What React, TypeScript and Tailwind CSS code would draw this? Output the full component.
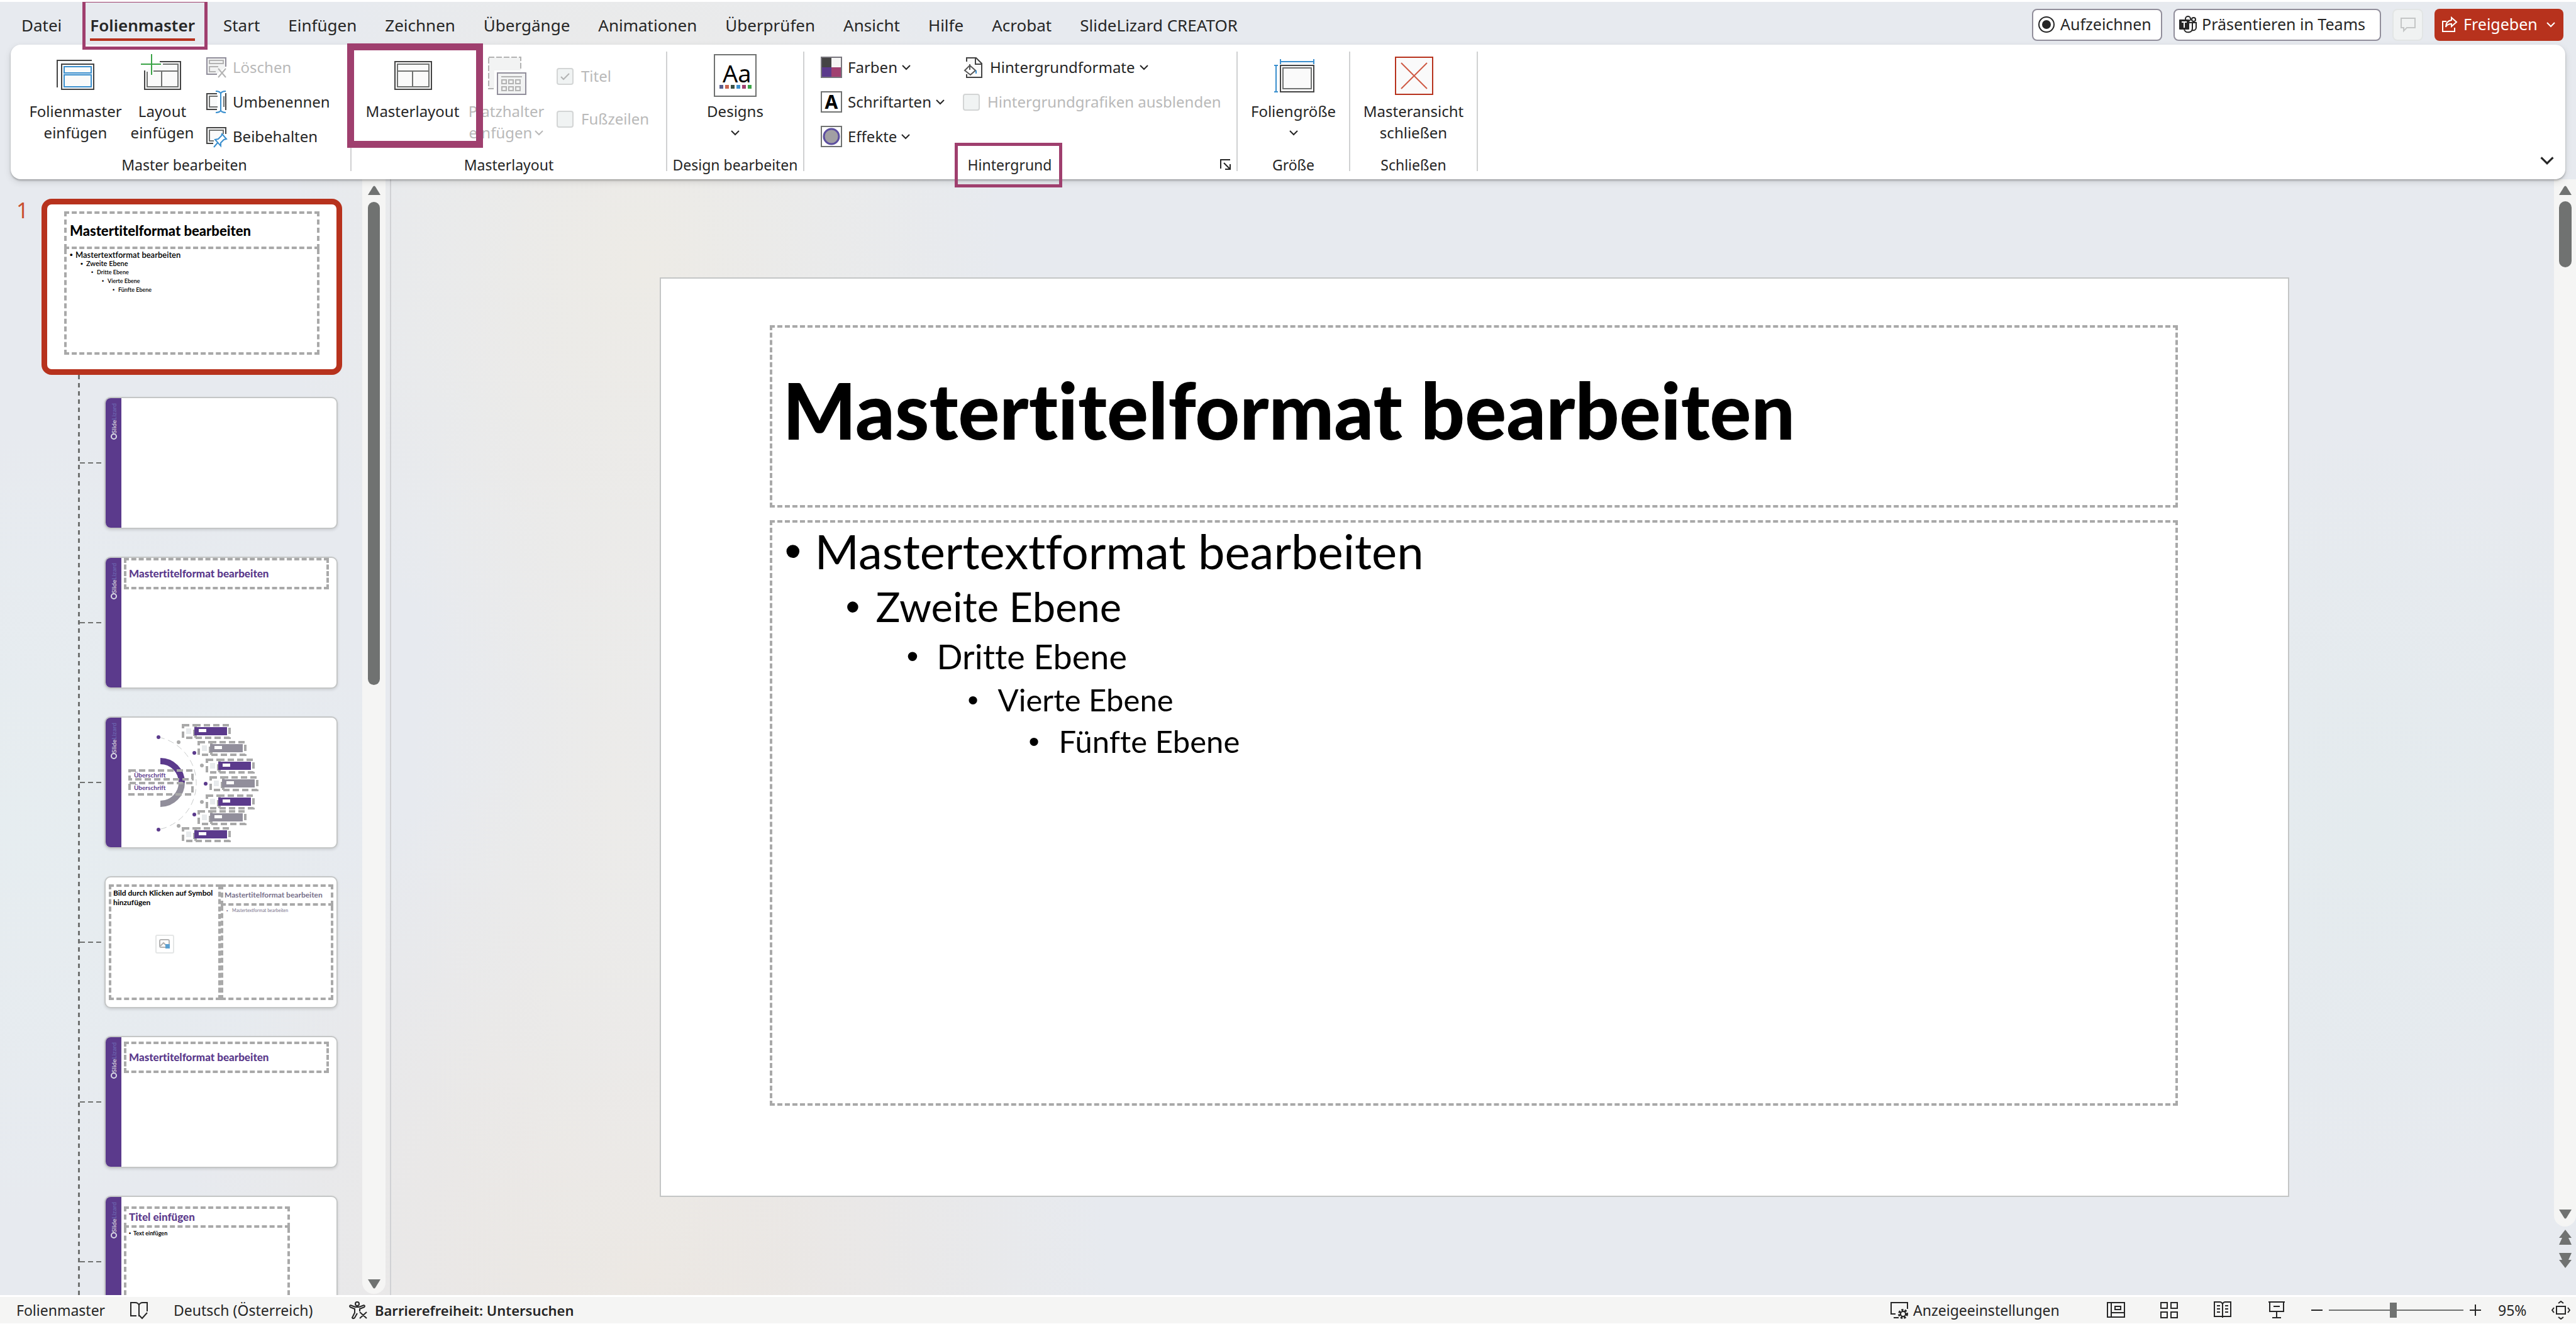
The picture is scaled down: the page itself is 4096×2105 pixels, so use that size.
import React, { useState } from 'react';
import clsx from 'clsx';

const TABS = [
  'Datei',
  'Folienmaster',
  'Start',
  'Einfügen',
  'Zeichnen',
  'Übergänge',
  'Animationen',
  'Überprüfen',
  'Ansicht',
  'Hilfe',
  'Acrobat',
  'SlideLizard CREATOR',
];

const BODY_LEVELS = [
  { text: 'Mastertextformat bearbeiten', big: 'text-[76px] leading-[90px] pl-0', mini: 'text-[13px] pl-0' },
  { text: 'Zweite Ebene', big: 'text-[65px] leading-[87px] pl-[97px]', mini: 'text-[11px] pl-[17px]' },
  { text: 'Dritte Ebene', big: 'text-[54px] leading-[71px] pl-[194px]', mini: 'text-[9px] pl-[34px]' },
  { text: 'Vierte Ebene', big: 'text-[49px] leading-[66px] pl-[291px]', mini: 'text-[9px] pl-[51px]' },
  { text: 'Fünfte Ebene', big: 'text-[49px] leading-[66px] pl-[388px]', mini: 'text-[9px] pl-[68px]' },
];

/* ---------- Icons ---------- */

const Chevron = ({ className = 'w-[14px] h-[14px]' }: { className?: string }) => (
  <svg viewBox="0 0 14 14" className={clsx('shrink-0', className)} fill="none" stroke="currentColor" strokeWidth="2">
    <path d="M1 4l6 6 6-6" />
  </svg>
);

const BigIcon = ({ children }: { children: React.ReactNode }) => (
  <svg viewBox="0 0 68 68" className="w-[68px] h-[68px] shrink-0 overflow-visible" fill="none" strokeWidth="2">
    {children}
  </svg>
);

const SmallIcon = ({ children }: { children: React.ReactNode }) => (
  <svg viewBox="0 0 34 36" className="w-[34px] h-[36px] shrink-0 overflow-visible" fill="none" strokeWidth="2">
    {children}
  </svg>
);

const InsertMasterIcon = () => (
  <BigIcon>
    <path d="M5 53V10h55" stroke="#444" />
    <rect x="12" y="16" width="51" height="40" fill="#fafafa" stroke="#444" />
    <rect x="16" y="20" width="43" height="10" stroke="#3a8fce" />
    <rect x="16" y="33" width="43" height="19" stroke="#3a8fce" />
  </BigIcon>
);

const InsertLayoutIcon = () => (
  <BigIcon>
    <path d="M6 26V56h57V12H30" fill="#fafafa" stroke="#444" />
    <path d="M35 16h24v36H10V28M20 27h39M33 27v25" stroke="#707271" />
    <path d="M17 0v33M0 16h32" stroke="#3ba447" />
  </BigIcon>
);

const MasterLayoutIcon = () => (
  <BigIcon>
    <rect x="6" y="12" width="58" height="44" fill="#fafafa" stroke="#444" />
    <rect x="10" y="16" width="50" height="36" stroke="#707271" />
    <path d="M10 27h50M34 27v25" stroke="#707271" />
  </BigIcon>
);

const PlaceholderIcon = () => (
  <BigIcon>
    <rect x="6" y="5" width="51" height="50" fill="#f2f3f3" stroke="#b3b3b3" strokeDasharray="9 3" />
    <path d="M15 26h49v42H15z" fill="#fff" />
    <rect x="20" y="30" width="45" height="34" fill="#f2f3f3" stroke="#918e9b" />
    <path d="M26 36h33" stroke="#b3b3b3" />
    {[27, 38, 49].map((x) => (
      <g key={x} stroke="#b3b3b3">
        <rect x={x} y="41" width="7" height="6" />
        <rect x={x} y="52" width="7" height="6" />
      </g>
    ))}
  </BigIcon>
);

const DesignsIcon = () => (
  <BigIcon>
    <rect x="1" y="1" width="66" height="66" fill="#fff" stroke="#707271" />
    <text x="14" y="45" fontSize="38" fill="#000" className="font-['Noto_Sans',sans-serif]">
      Aa
    </text>
    {['#595f8f', '#c9634f', '#3d5245', '#3a8fce', '#a04070', '#3ba447'].map((c, i) => (
      <rect key={c} x={9 + i * 9} y="49" width="6" height="6" fill={c} />
    ))}
  </BigIcon>
);

const SlideSizeIcon = () => (
  <BigIcon>
    <path d="M13 12h53M13 8v8M66 8v8M6 18v42M3 18h6M3 60h6" stroke="#3a8fce" />
    <rect x="13" y="18" width="53" height="42" fill="#fafafa" stroke="#444" />
    <rect x="17" y="22" width="45" height="33" stroke="#707271" />
  </BigIcon>
);

const CloseMasterIcon = () => (
  <BigIcon>
    <rect x="5" y="5" width="59" height="59" fill="#fafafa" stroke="#b7321d" />
    <path d="M14 14l41 41M55 14L14 55" stroke="#cf5b45" />
  </BigIcon>
);

const DeleteIcon = () => (
  <SmallIcon>
    <path d="M18 29H2V3h30v14" fill="#f2f3f3" stroke="#918e9b" />
    <path d="M6 7h22v5H6zM16 25H6v-8h14" stroke="#b3b3b3" />
    <path d="M20 20l12 14M32 20L20 34" stroke="#b3b3b3" />
  </SmallIcon>
);

const RenameIcon = () => (
  <SmallIcon>
    <path d="M18 5H2v25h16M31 5h1v25h-1" fill="#fafafa" stroke="#444" />
    <path d="M19 9H6v17h13M29 9v17" stroke="#707271" />
    <path d="M16 1c5 0 8 2 8 4 0-2 3-4 8-4M16 35c5 0 8-2 8-4 0 2 3 4 8 4M24 4v28" stroke="#3a8fce" />
  </SmallIcon>
);

const PreserveIcon = () => (
  <SmallIcon>
    <path d="M12 29H2V4h30v10" fill="#fafafa" stroke="#444" />
    <path d="M13 25H6V8h22v6" stroke="#707271" />
    <path d="M26 14l7 8-4 1-5 5 0 5-9-10 5-1 5-5zM19 28l-6 7" fill="#fff" stroke="#3a8fce" />
  </SmallIcon>
);

const ColorsIcon = () => (
  <SmallIcon>
    <rect x="2" y="3" width="15" height="15" fill="#444" />
    <rect x="17" y="3" width="15" height="15" fill="#f5f5f4" />
    <rect x="2" y="18" width="15" height="15" fill="#5b3a8c" />
    <rect x="17" y="18" width="15" height="15" fill="#a04070" />
    <rect x="1" y="2" width="32" height="32" stroke="#77757c" />
  </SmallIcon>
);

const FontsIcon = () => (
  <SmallIcon>
    <rect x="1" y="2" width="32" height="32" fill="#fff" stroke="#707271" />
    <text x="17" y="29" fontSize="30" fontWeight="700" textAnchor="middle" fill="#000" className="font-['Noto_Sans',sans-serif]">
      A
    </text>
  </SmallIcon>
);

const EffectsIcon = () => (
  <SmallIcon>
    <rect x="1" y="2" width="32" height="32" fill="#fff" stroke="#707271" />
    <circle cx="17" cy="18" r="12" fill="#a19fa3" stroke="#5d4fa0" strokeWidth="3" />
  </SmallIcon>
);

const BackgroundIcon = () => (
  <SmallIcon>
    <path d="M6 9V3h15l9 9v22H6v-5M20 3v10h10" fill="#fafafa" stroke="#444" />
    <path d="M11 13v9M11 15l9 8-8 7-9-7z" fill="#fff" stroke="#565656" />
    <path d="M21 23v5" stroke="#3a8fce" />
  </SmallIcon>
);

const RecordIcon = () => (
  <svg viewBox="0 0 26 26" className="w-[26px] h-[26px] shrink-0" fill="none">
    <circle cx="13" cy="13" r="12" stroke="#262626" strokeWidth="2" />
    <circle cx="13" cy="13" r="7" fill="#262626" />
  </svg>
);

const TeamsIcon = () => (
  <svg viewBox="0 0 28 28" className="w-[28px] h-[28px] shrink-0" fill="none">
    <circle cx="14" cy="5" r="4" stroke="#262626" strokeWidth="2" />
    <circle cx="23" cy="6" r="3" stroke="#262626" strokeWidth="2" />
    <path d="M19 11h8v8c0 3-3 5-6 4M9 11h12v9c0 8-11 8-13 2" stroke="#262626" strokeWidth="2" />
    <rect x="0" y="6" width="16" height="16" rx="1" fill="#262626" />
    <path d="M4 10h8M8 10v9" stroke="#fff" strokeWidth="2" />
  </svg>
);

const CommentIcon = () => (
  <svg viewBox="0 0 26 26" className="w-[26px] h-[26px]" fill="none" stroke="#c4c6c6" strokeWidth="2">
    <path d="M2 3h22v15H11l-5 5v-5H2z" />
  </svg>
);

const ShareIcon = () => (
  <svg viewBox="0 0 26 26" className="w-[26px] h-[26px] shrink-0" fill="none" stroke="currentColor" strokeWidth="2">
    <path d="M8 8H2v16h19v-6" />
    <path d="M16 2l8 7-8 7v-4c-5 0-8 2-9 5 0-6 3-10 9-11z" />
  </svg>
);

const LauncherIcon = () => (
  <svg viewBox="0 0 18 18" className="w-[18px] h-[18px]" fill="none" stroke="#262626" strokeWidth="2">
    <path d="M1 15V1h15M6 6l9 9M16 8v8H8" />
  </svg>
);

const StatusIcon = ({ children }: { children: React.ReactNode }) => (
  <svg viewBox="0 0 30 30" className="w-[30px] h-[30px] shrink-0" fill="none" stroke="#262626" strokeWidth="2">
    {children}
  </svg>
);

/* ---------- Ribbon parts ---------- */

type Disabled = { disabled?: boolean };

const Group = ({ label, className, launcher, children }: { label: string; className: string; launcher?: boolean; children: React.ReactNode }) => (
  <section aria-label={label} className={clsx('relative flex flex-col justify-between border-r-2 border-[#d0d1d2] shrink-0', className)}>
    <div className="flex">{children}</div>
    <div className="flex items-center">
      <span className="flex-1 text-center text-[23px] leading-5 whitespace-nowrap">{label}</span>
      {launcher && (
        <button aria-label="Hintergrund formatieren" className="w-[34px] flex justify-center">
          <LauncherIcon />
        </button>
      )}
    </div>
  </section>
);

const BigButton = ({ icon, lines, className, chevron, disabled }: { icon: React.ReactNode; lines: string[]; className: string; chevron?: boolean } & Disabled) => (
  <button disabled={disabled} className={clsx('flex flex-col items-center gap-[6px] pt-1 text-[24px] leading-[34px] whitespace-nowrap', disabled && 'text-[#b9b9b9]', className)}>
    {icon}
    <span className="flex flex-col items-center">
      <span>{lines[0]}</span>
      <span className="flex items-center gap-1 h-[34px]">
        {lines[1]}
        {chevron && <Chevron />}
      </span>
    </span>
  </button>
);

const SmallButton = ({ icon, label, chevron, disabled }: { icon: React.ReactNode; label: string; chevron?: boolean } & Disabled) => (
  <button disabled={disabled} className={clsx('flex items-center gap-[9px] h-[50px] text-[24px] whitespace-nowrap', disabled && 'text-[#b9b9b9]')}>
    {icon}
    <span className="flex items-center gap-[7px]">
      {label}
      {chevron && <Chevron />}
    </span>
  </button>
);

const Check = ({ label, checked }: { label: string; checked?: boolean }) => (
  <label className="flex items-center gap-3 h-[50px] text-[24px] text-[#b9b9b9] whitespace-nowrap">
    <span className="relative flex">
      <input type="checkbox" disabled defaultChecked={checked} className="appearance-none w-[27px] h-[27px] rounded-[4px] border-2 border-[#d3d5d5] bg-[#f0f3f3]" />
      {checked && (
        <svg viewBox="0 0 27 27" className="absolute inset-0" fill="none" stroke="#b3b3b3" strokeWidth="2">
          <path d="M7 14l4 4 9-9" />
        </svg>
      )}
    </span>
    {label}
  </label>
);

const Highlight = ({ className }: { className: string }) => (
  <span className={clsx('absolute border-[#9f3f6e] pointer-events-none z-10', className)} />
);

/* ---------- Thumbnails ---------- */

const Dashed = ({ className, children }: { className?: string; children?: React.ReactNode }) => (
  <div className={clsx('border-4 border-dashed border-[#a9a9a9]', className)}>{children}</div>
);

const Bullet = ({ className }: { className: string }) => (
  <span className={clsx("inline-block shrink-0 font-['Liberation_Sans',sans-serif]", className)}>•</span>
);

const PurpleBar = () => (
  <div className="w-[25px] shrink-0 bg-[#5b3a8c] flex flex-col items-center pt-[8px]">
    <span className="[writing-mode:vertical-rl] rotate-180 text-[10px] leading-[12px] font-bold text-[#c9c5d4]">
      Slide<span className="text-[#6a62ad]">Lizard</span>
    </span>
    <span className="w-[10px] h-[10px] rounded-full border-2 border-[#d8d8e4]" />
  </div>
);

const LayoutRow = ({ children }: { children: React.ReactNode }) => (
  <li className="flex items-center shrink-0">
    <span className="w-[39px] h-[2px] bg-[repeating-linear-gradient(90deg,#707271_0_8px,transparent_8px_13px)]" />
    <button className="flex items-stretch text-left w-[371px] h-[210px] rounded-[10px] overflow-hidden bg-white border-2 border-[#c4c6c6] shadow-[0_2px_4px_rgba(0,0,0,0.12)]">
      {children}
    </button>
  </li>
);

const PURPLE = '#5b3a8c';
const GREY = '#918e9b';

const BARS = [
  { x: 121, y: 11, fill: PURPLE },
  { x: 146, y: 38, fill: GREY },
  { x: 159, y: 66, fill: PURPLE },
  { x: 165, y: 94, fill: GREY },
  { x: 159, y: 123, fill: PURPLE },
  { x: 146, y: 148, fill: GREY },
  { x: 121, y: 175, fill: PURPLE },
];

const DOTS = [
  [84, 31], [116, 39], [141, 56], [153, 76], [159, 105], [153, 134], [141, 154], [116, 172], [84, 178],
];

const RadialLayout = () => (
  <svg viewBox="25 0 342 206" className="w-[342px] h-[206px]" fill="none">
    <path d="M84 31A75 75 0 0 1 84 178" stroke="#c9cbcb" strokeDasharray="10 6" />
    <path d="M87 69a34 34 0 0 1 34 34" stroke={PURPLE} strokeWidth="10" />
    <path d="M121 103a34 34 0 0 1-34 34" stroke={GREY} strokeWidth="10" />
    {DOTS.map(([x, y], i) => (
      <circle key={i} cx={x} cy={y} r="3" fill={i % 2 ? '#a9a9a9' : PURPLE} />
    ))}
    <g stroke="#a9a9a9" strokeWidth="4" strokeDasharray="10 5">
      <rect x="38" y="84" width="100" height="14" />
      <rect x="38" y="104" width="100" height="18" />
    </g>
    <g fontSize="10" fontWeight="700" fill={PURPLE} className="font-['Lato',sans-serif]">
      <text x="45" y="95">Überschrift</text>
      <text x="45" y="115">Überschrift</text>
    </g>
    {BARS.map(({ x, y, fill }) => (
      <g key={y}>
        <g stroke="#a9a9a9" strokeWidth="4" strokeDasharray="10 5">
          <rect x={x + 2} y={y + 1} width="20" height="20" />
          <rect x={x + 20} y={y + 1} width="56" height="20" />
        </g>
        <rect x={x + 20} y={y + 4} width="52" height="13" fill={fill} />
        <rect x={x + 7} y={y + 6} width="8" height="9" fill="#e7eaec" />
        <rect x={x + 27} y={y + 7} width="12" height="5" fill="#fff" />
      </g>
    ))}
  </svg>
);

const MasterThumb = () => (
  <button className="flex flex-col items-stretch justify-start text-left ml-[66px] w-[478px] h-[280px] rounded-[16px] border-[9px] border-[#b7321d] bg-white px-[27px] pt-[11px] font-['Lato_Black','Lato',sans-serif] text-black">
    <Dashed className="h-[60px] flex items-center px-[5px] text-[22px] font-black whitespace-nowrap">Mastertitelformat bearbeiten</Dashed>
    <Dashed className="h-[168px] border-t-0 pl-[5px] pt-[2px] font-['Lato',sans-serif]">
      <ul className="leading-[14px]">
        {BODY_LEVELS.map(({ text, mini }) => (
          <li key={text} className={clsx('flex h-[14px] items-center font-semibold', mini)}>
            <Bullet className="w-[9px]" />
            {text}
          </li>
        ))}
      </ul>
    </Dashed>
  </button>
);

const Sidebar = () => (
  <aside className="flex w-[622px] shrink-0 border-r-2 border-[#d0d1d4]">
    <div className="relative flex-1 overflow-hidden pt-[31px] [font-variant-ligatures:none]">
      <span className="absolute left-[26px] top-[28px] text-[34px] leading-[42px] text-[#c9502f]">1</span>
      <MasterThumb />
      <div className="flex pl-[124px]">
        <span className="w-[3px] bg-[repeating-linear-gradient(#707271_0_7px,transparent_7px_13px)]" />
        <ul className="flex flex-col gap-[44px] pt-[35px] font-['Lato',sans-serif]">
          <LayoutRow>
            <PurpleBar />
          </LayoutRow>
          <LayoutRow>
            <PurpleBar />
            <Dashed className="ml-1 w-[326px] h-[50px] flex items-center px-1 text-[17px] font-black text-[#5b3a8c] whitespace-nowrap">
              Mastertitelformat bearbeiten
            </Dashed>
          </LayoutRow>
          <LayoutRow>
            <PurpleBar />
            <RadialLayout />
          </LayoutRow>
          <LayoutRow>
            <div className="flex flex-1 px-[5px] py-[11px]">
              <Dashed className="w-[178px] flex flex-col px-[3px] pt-[2px] text-[12px] leading-[15px] font-bold text-black">
                Bild durch Klicken auf Symbol hinzufügen
                <span className="mt-[44px] self-center w-[30px] h-[30px] rounded-[3px] border-2 border-[#e4e6e6] flex items-center justify-center">
                  <svg viewBox="0 0 18 16" className="w-[18px] h-[16px]" fill="none">
                    <rect x="1" y="1" width="15" height="12" rx="2" stroke="#b3b3b3" strokeWidth="2" />
                    <path d="M2 11l5-5 5 5" stroke="#b3b3b3" strokeWidth="2" />
                    <rect x="10" y="8" width="7" height="7" fill="#5a9fd0" />
                  </svg>
                </span>
              </Dashed>
              <div className="flex-1 flex flex-col">
                <Dashed className="h-[34px] flex items-center px-[2px] text-[12px] font-bold text-[#77708a] whitespace-nowrap">Mastertitelformat bearbeiten</Dashed>
                <Dashed className="flex-1 border-t-0 pl-[5px] pt-[2px] text-[7px] leading-[10px] text-[#77708a]">
                  <Bullet className="w-[9px]" />
                  Mastertextformat bearbeiten
                </Dashed>
              </div>
            </div>
          </LayoutRow>
          <LayoutRow>
            <PurpleBar />
            <Dashed className="ml-1 mt-[7px] w-[326px] h-[50px] flex items-center px-1 text-[17px] font-black text-[#5b3a8c] whitespace-nowrap">
              Mastertitelformat bearbeiten
            </Dashed>
          </LayoutRow>
          <LayoutRow>
            <PurpleBar />
            <div className="ml-1 mt-[15px] w-[264px] flex flex-col">
              <Dashed className="h-[34px] flex items-center px-1 text-[17px] font-black text-[#5b3a8c]">Titel einfügen</Dashed>
              <Dashed className="flex-1 border-t-0 pl-1 pt-[2px] text-[9px] leading-[14px] font-bold text-black">
                <Bullet className="w-[7px]" />
                Text einfügen
              </Dashed>
            </div>
          </LayoutRow>
        </ul>
      </div>
    </div>
    <div className="w-[37px] mr-[7px] mb-[2px] rounded-b-[18px] bg-[#f5f5f4] flex flex-col items-center justify-between pt-[10px] pb-[8px] text-[#707271]">
      <div className="flex flex-col items-center gap-[11px]">
        <svg viewBox="0 0 20 15" className="w-[20px] h-[15px]" fill="currentColor">
          <path d="M8 2q2-3 4 0l8 13H0z" />
        </svg>
        <span className="w-[19px] h-[768px] rounded-full bg-[#707271]" />
      </div>
      <svg viewBox="0 0 20 15" className="w-[20px] h-[15px]" fill="currentColor">
        <path d="M0 0h20l-8 13q-2 3-4 0z" />
      </svg>
    </div>
  </aside>
);

const Slide = () => (
  <div className="w-[75.5%] aspect-[2591/1461] bg-white border-2 border-[#c4c6c6] pt-[74px] pl-[173px] pr-[175px] pb-[143px] flex flex-col gap-[20px] font-['Lato',sans-serif] text-black [font-variant-ligatures:none]">
    <Dashed className="h-[290px] flex items-center pl-[17px] pb-[20px]">
      <h1 className="text-[123px] leading-[150px] font-['Lato_Black','Lato',sans-serif] font-black whitespace-nowrap">Mastertitelformat bearbeiten</h1>
    </Dashed>
    <Dashed className="flex-1 pl-[20px]">
      <ul>
        {BODY_LEVELS.map(({ text, big }) => (
          <li key={text} className={clsx('flex whitespace-nowrap', big)}>
            <Bullet className="w-[48px]" />
            {text}
          </li>
        ))}
      </ul>
    </Dashed>
  </div>
);

const StatusBar = () => {
  const [zoom, setZoom] = useState(48);
  return (
    <footer className="h-[46px] shrink-0 bg-[#f5f5f4] border-t-[3px] border-b border-white flex items-center justify-between pl-[26px] pr-[9px] text-[23px] leading-[30px] whitespace-nowrap">
      <div className="flex items-center">
        <span className="w-[180px]">Folienmaster</span>
        <button aria-label="Rechtschreibprüfung" className="w-[70px]">
          <StatusIcon>
            <path d="M15 7c-1-3-3-4-6-4H2v21h9M15 7c1-3 3-4 6-4h7v14M15 7v18M15 23l5 5 8-9" />
          </StatusIcon>
        </button>
        <button className="w-[279px] text-left">Deutsch (Österreich)</button>
        <button className="flex items-center gap-[11px] text-[22px] font-semibold">
          <StatusIcon>
            <circle cx="13" cy="5" r="3" />
            <path d="M2 7c-2 2 0 4 2 4l5 2v6l-4 8c1 2 3 1 4 0l4-7M24 7c2 2 0 4-2 4l-5 2v4M2 7l8 3h6l8-3M17 18l11 10M28 18L17 28" />
          </StatusIcon>
          Barrierefreiheit: Untersuchen
        </button>
      </div>
      <div className="flex items-center">
        <button className="flex items-center gap-[7px] w-[344px]">
          <StatusIcon>
            <path d="M9 21H2V3h26v10" />
            <path d="M6 27h8" />
            <circle cx="21" cy="21" r="6" strokeWidth="4" strokeDasharray="3 2" />
            <circle cx="21" cy="21" r="4" />
          </StatusIcon>
          Anzeigeeinstellungen
        </button>
        <button aria-label="Normal" className="w-[85px]">
          <StatusIcon>
            <path d="M2 3h27v23H2zM8 3v23M8 19h21M14 9h9v5h-9z" />
          </StatusIcon>
        </button>
        <button aria-label="Foliensortierung" className="w-[86px]">
          <StatusIcon>
            <path d="M2 3h10v9H2zM18 3h10v9H18zM2 18h10v9H2zM18 18h10v9H18z" />
          </StatusIcon>
        </button>
        <button aria-label="Leseansicht" className="w-[86px]">
          <StatusIcon>
            <path d="M14 5c-1-2-2-3-4-3H1v23h13M14 5c1-2 2-3 4-3h9v23H14M14 5v22M5 8h5M5 13h5M5 18h5M18 8h5M18 13h5M18 18h5" />
          </StatusIcon>
        </button>
        <button aria-label="Bildschirmpräsentation" className="w-[69px]">
          <StatusIcon>
            <path d="M1 2h26M3 2v15h22V2M14 17v10M7 27h14M9 9h10" />
          </StatusIcon>
        </button>
        <button aria-label="Verkleinern" className="flex">
          <svg viewBox="0 0 18 18" className="w-[18px] h-[18px]" stroke="#262626" strokeWidth="2">
            <path d="M0 9h18" />
          </svg>
        </button>
        <input
          type="range"
          aria-label="Zoom"
          min={0}
          max={100}
          value={zoom}
          onChange={(e) => setZoom(Number(e.target.value))}
          className="appearance-none mx-[10px] w-[214px] h-[24px] bg-[linear-gradient(#707271,#707271)] bg-[length:100%_2px] bg-center bg-no-repeat [&::-webkit-slider-thumb]:appearance-none [&::-webkit-slider-thumb]:w-[11px] [&::-webkit-slider-thumb]:h-[24px] [&::-webkit-slider-thumb]:bg-[#707271]"
        />
        <button aria-label="Vergrößern" className="flex">
          <svg viewBox="0 0 18 18" className="w-[18px] h-[18px]" stroke="#262626" strokeWidth="2">
            <path d="M0 9h18M9 0v18" />
          </svg>
        </button>
        <button className="w-[112px] pl-[27px] text-left">95%</button>
        <button aria-label="Folie an Fenster anpassen" className="flex">
          <StatusIcon>
            <path d="M8 9h14v12H8zM11 4l4-3 4 3M11 26l4 3 4-3M4 11l-3 4 3 4M26 11l3 4-3 4" />
          </StatusIcon>
        </button>
      </div>
    </footer>
  );
};

const App: React.FC = () => {
  const [active, setActive] = useState('Folienmaster');

  return (
    <div className="h-screen overflow-hidden flex flex-col border-t-[3px] border-white font-['Noto_Sans','Open_Sans',sans-serif] text-[#262626] bg-[#e7eaef] bg-[radial-gradient(ellipse_14%_34%_at_25%_20%,#edebe6_0%,transparent_100%),radial-gradient(ellipse_8%_60%_at_24%_60%,#ecebe9_0%,transparent_100%),radial-gradient(ellipse_18%_40%_at_25%_96%,#ece6e0_0%,transparent_100%),radial-gradient(ellipse_16%_30%_at_0%_62%,#e6edf0_0%,transparent_100%),radial-gradient(ellipse_14%_30%_at_92%_62%,#e4ebee_0%,transparent_100%)]">
      {/* Tabs */}
      <header className="relative z-20 h-[68px] shrink-0 flex items-center justify-between pt-1 pl-[34px] pr-[20px]">
        <nav className="flex gap-[45px] pt-[2px] text-[26px] leading-[38px] whitespace-nowrap">
          {TABS.map((tab) => (
            <button key={tab} onClick={() => setActive(tab)} className={clsx('relative', tab === active && 'font-semibold')}>
              {tab}
              {tab === active && <span className="absolute inset-x-0 -bottom-[6px] h-1 bg-[#b7321d]" />}
              {tab === 'Folienmaster' && <Highlight className="border-[5px] -left-3 -right-5 -top-[22px] -bottom-[20px]" />}
            </button>
          ))}
        </nav>
        <div className="flex gap-[18px] text-[25px] whitespace-nowrap">
          <button className="h-[51px] w-[207px] flex items-center gap-[9px] pl-[8px] rounded-[8px] border-2 border-[#918e9b] bg-white">
            <RecordIcon />
            Aufzeichnen
          </button>
          <button className="h-[51px] w-[330px] flex items-center gap-[8px] pl-[7px] rounded-[8px] border-2 border-[#918e9b] bg-white">
            <TeamsIcon />
            Präsentieren in Teams
          </button>
          <button aria-label="Kommentare" disabled className="h-[51px] w-[49px] flex items-center justify-center rounded-[8px] border-2 border-[#e2e5e5] bg-[#f0f2f2]">
            <CommentIcon />
          </button>
          <button className="h-[51px] w-[205px] flex items-center pl-[11px] rounded-[8px] bg-[#b7321d] text-white">
            <ShareIcon />
            <span className="ml-[9px] mr-[14px]">Freigeben</span>
            <Chevron />
          </button>
        </div>
      </header>

      {/* Ribbon */}
      <div className="relative z-10 mx-[17px] h-[214px] shrink-0 flex rounded-[16px] bg-white pt-[11px] pb-[13px] shadow-[0_2px_3px_rgba(0,0,0,0.25),0_4px_12px_rgba(0,0,0,0.12)]">
        <Group label="Master bearbeiten" className="w-[542px] [&>div:first-child]:pl-6 [&>div:last-child]:pl-3">
          <BigButton icon={<InsertMasterIcon />} lines={['Folienmaster', 'einfügen']} className="w-[158px]" />
          <BigButton icon={<InsertLayoutIcon />} lines={['Layout', 'einfügen']} className="w-[118px]" />
          <div className="flex flex-col gap-[5px] pl-[10px]">
            <SmallButton icon={<DeleteIcon />} label="Löschen" disabled />
            <SmallButton icon={<RenameIcon />} label="Umbenennen" />
            <SmallButton icon={<PreserveIcon />} label="Beibehalten" />
          </div>
        </Group>
        <Group label="Masterlayout" className="w-[502px] [&>div:first-child]:pl-2">
          <BigButton icon={<MasterLayoutIcon />} lines={['Masterlayout', '']} className="w-[178px]" />
          <BigButton icon={<PlaceholderIcon />} lines={['Platzhalter', 'einfügen']} className="w-[120px]" chevron disabled />
          <div className="flex flex-col gap-[18px] pl-5 pt-[14px]">
            <Check label="Titel" checked />
            <Check label="Fußzeilen" />
          </div>
          <Highlight className="border-[11px] -left-[7px] -top-[13px] w-[216px] h-[166px]" />
        </Group>
        <Group label="Design bearbeiten" className="w-[218px]">
          <BigButton icon={<DesignsIcon />} lines={['Designs', '']} className="w-full" chevron />
        </Group>
        <Group label="Hintergrund" className="w-[689px]" launcher>
          <div className="flex flex-col gap-[5px] w-[252px] pl-[26px]">
            <SmallButton icon={<ColorsIcon />} label="Farben" chevron />
            <SmallButton icon={<FontsIcon />} label="Schriftarten" chevron />
            <SmallButton icon={<EffectsIcon />} label="Effekte" chevron />
          </div>
          <div className="flex flex-col gap-[5px]">
            <SmallButton icon={<BackgroundIcon />} label="Hintergrundformate" chevron />
            <Check label="Hintergrundgrafiken ausblenden" />
          </div>
          <Highlight className="border-[5px] left-[239px] -bottom-[26px] w-[171px] h-[71px]" />
        </Group>
        <Group label="Größe" className="w-[179px]">
          <BigButton icon={<SlideSizeIcon />} lines={['Foliengröße', '']} className="w-full" chevron />
        </Group>
        <Group label="Schließen" className="w-[203px]">
          <BigButton icon={<CloseMasterIcon />} lines={['Masteransicht', 'schließen']} className="w-full" />
        </Group>
        <button aria-label="Menüband reduzieren" className="ml-auto self-end mr-[18px] mb-[6px]">
          <Chevron className="w-[22px] h-[22px]" />
        </button>
      </div>

      {/* Workspace */}
      <main className="flex flex-1 min-h-0">
        <Sidebar />
        <section className="flex-1 flex items-center justify-center pl-[6px]">
          <Slide />
        </section>
        <div className="w-[35px] flex flex-col text-[#707271]">
          <div className="flex-1 rounded-b-[18px] bg-[#f5f5f4] flex flex-col items-center justify-between pt-[10px] pb-[12px]">
            <div className="flex flex-col items-center gap-[10px]">
              <svg viewBox="0 0 20 15" className="w-[20px] h-[15px]" fill="currentColor">
                <path d="M8 2q2-3 4 0l8 13H0z" />
              </svg>
              <span className="w-[20px] h-[105px] rounded-full bg-[#707271]" />
            </div>
            <svg viewBox="0 0 20 15" className="w-[20px] h-[15px]" fill="currentColor">
              <path d="M0 0h20l-8 13q-2 3-4 0z" />
            </svg>
          </div>
          <div className="flex flex-col items-center gap-[13px] pt-[5px] pb-[43px]">
            <button aria-label="Vorherige Folie" className="flex">
              <svg viewBox="0 0 20 24" className="w-[20px] h-[24px]" fill="currentColor">
                <path d="M10 0l10 13h-5l5 11H0l5-11H0z" />
              </svg>
            </button>
            <button aria-label="Nächste Folie" className="flex">
              <svg viewBox="0 0 20 24" className="w-[20px] h-[24px]" fill="currentColor">
                <path d="M10 24L0 11h5L0 0h20l-5 11h5z" />
              </svg>
            </button>
          </div>
        </div>
      </main>

      <StatusBar />
    </div>
  );
};

export default App;
